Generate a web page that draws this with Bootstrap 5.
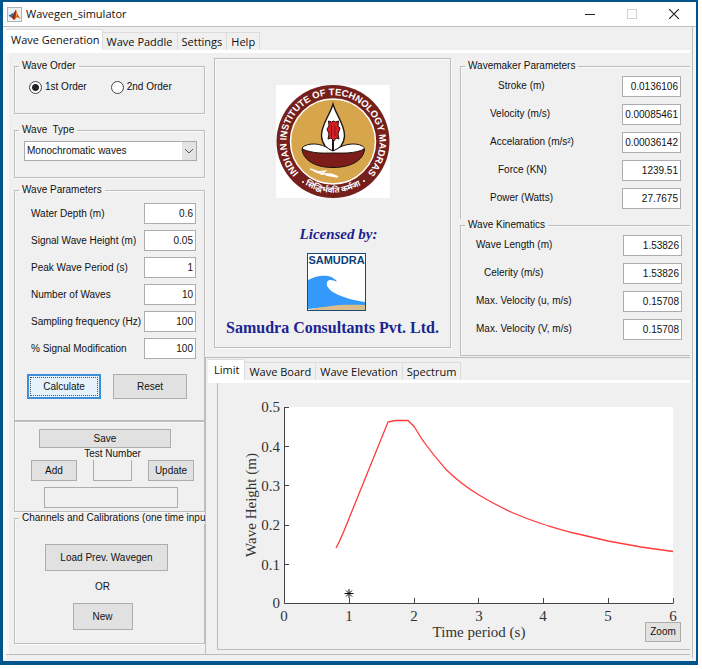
<!DOCTYPE html>
<html lang="en">
<head>
<meta charset="utf-8">
<meta name="viewport" content="width=device-width, initial-scale=1">
<title>Wavegen_simulator</title>
<link href="https://cdn.jsdelivr.net/npm/bootstrap@5.3.0/dist/css/bootstrap.min.css" rel="stylesheet">
<style>
  :root { --line: #bdbdbd; --face: #f0f0f0; --ink: #111; }
  body { font-family: "Liberation Sans", Arial, sans-serif; font-size: 10px; line-height: 12px; color: var(--ink); background: #fff; padding: 0 4px 4px 0; }
  .app-window { border: 3px solid #00568c; border-top-width: 2px; border-right-width: 2px; border-bottom-width: 4px; background: var(--face); min-height: calc(100vh - 4px); }

  .title-bar { height: 25px; background: #fff; border-bottom: 1px solid var(--line); padding: 0 17px 0 4px; font-family: "Open Sans", "Noto Sans", sans-serif; font-size: 11px; }
  .title-bar button { border: 0; background: none; padding: 0; line-height: 0; }
  .client { border-left: 3px solid #fafafa; border-right: 3px solid #f5f5f5; box-shadow: inset -1px 0 var(--line); padding: 3px 3px 3px 0; }

  .tab-strip { font-family: "Open Sans", "Noto Sans", sans-serif; font-size: 11px; height: 20px; border: 0; flex-wrap: nowrap; align-items: flex-end; }
  .tab-strip .nav-link { color: var(--ink); border: 1px solid #dcdcdc; border-width: 1px 1px 0 0; border-radius: 0; height: 18px; padding: 0 4px; line-height: 18px; white-space: nowrap; background: var(--face); margin: 0; }
  .tab-strip .nav-link.active { background: #fff; color: var(--ink); height: 21px; padding: 0 2px 0 5px; line-height: 20px; border-color: #dcdcdc; }
  .plots .tab-strip .nav-link.active { padding: 0 5px 0 6px; }
  .page { border-top: 3px solid #fff; border-bottom: 1px solid var(--line); }

  .side { width: 199px; flex: none; padding: 7px 0 0 8px; box-shadow: inset 3px 0 #f8f8f8; }
  .main-part { min-width: 0; }
  .frame { border: 1px solid var(--line); box-shadow: 1px 1px #fafafa, inset 1px 1px #fafafa; min-width: 0; margin: 0; padding: 0; }
  .frame > legend { float: none; width: auto; margin: 0 0 0 4px; padding: 0 3px; font-size: 10px; line-height: 12px; white-space: nowrap; }
  .orders { padding: 9px 16px 19px 14px; }
  .kinds { margin-top: 10px; }
  .params { margin-top: 6px; }
  .radio-pick { appearance: none; width: 13px; height: 13px; border: 1px solid #444; border-radius: 50%; background: #fff; margin: 0 3px 0 0; padding: 0; }
  .radio-pick:checked { background: radial-gradient(circle, #222 0 3px, #fff 4px); }
  .pick-box { position: relative; width: 173px; margin: 5px 0 16px 9px; line-height: 0; }
  .pick { appearance: none; display: block; height: 20px; width: 173px; border: 1px solid #aaa; border-radius: 0; font-size: 10px; line-height: 18px; padding: 0 18px 0 2px; color: var(--ink); background-color: #fff; }
  .pick-box svg { position: absolute; right: 1px; top: 1px; background: #e3e3e3; pointer-events: none; }
  .box { height: 21px; border: 1px solid #abadb3; border-radius: 0; background: #fff; font-size: 10px; padding: 0 2px; text-align: right; color: var(--ink); flex: none; min-width: 0; }
  .w-side { width: 52px; }
  .w-main { width: 59px; }
  .key { white-space: nowrap; }
  .key-row { display: flex; align-items: center; justify-content: space-between; height: 27px; }
  .key-row.tall { height: 28px; }

  .push { border: 1px solid #adadad; border-radius: 0; background: #e1e1e1; font-size: 10px; line-height: 12px; padding: 0; color: var(--ink); height: 25px; white-space: nowrap; }
  .push.focused { border: 2px solid #3a8fd8; background: #e5f1fb; outline: 1px dotted #555; outline-offset: -4px; }
  .push.small-push { height: 21px; }
  .push.big-push { height: 27px; }
  .actions { gap: 12px; padding: 12px 17px 21px 12px; }
  .runs { padding: 7px 10px 3px 16px; }
  .push.save-run { height: 19px; width: 132px; margin-left: 8px; }
  .test-row { height: 21px; }
  .test-row .push { width: 46px; }
  .test-no { width: 39px; background: transparent; border-top: 0; }
  .test-note { width: 134px; background: transparent; margin: 6px 0 0 13px; }
  .calib { overflow: hidden; }
  .load { width: 123px; }
  .fresh { width: 60px; }
  .calib-body { gap: 10px; padding: 20px 6px 13px 0; }
  .calib-body .fresh, .calib-body span { margin-right: 8px; }

  .top-part { padding: 5px 0 0 9px; gap: 9px; }
  .licence { color: #1b2490; font-family: "Liberation Serif", "Times New Roman", serif; font-weight: bold; font-size: 16px; line-height: 20px; margin-bottom: 9px; }
  .by-line { font-size: 15px; margin: 0 0 9px 12px; }
  .seal { margin: 26px 0; }
  .firm { margin: 7px 0 9px; }
  .readings { width: 230px; flex: none; padding-top: 2px; }
  .open-end { border-right: 0; box-shadow: inset 1px 1px #fafafa; }
  .maker { padding: 0 9px 7px 29px; }
  .kinem { padding: 0 8px 12px 15px; }

  .plots { border: 1px solid var(--line); border-right: 0; border-bottom: 0; padding: 2px 0 4px 2px; }
  .plot-frame { border-left: 1px solid var(--line); border-bottom: 1px solid var(--line); margin-left: 9px; position: relative; }
  .plot-frame .zoomer { position: absolute; right: 9px; bottom: 7px; width: 36px; height: 20px; }
  .plot { display: block; width: 100%; height: auto; font-family: "Liberation Serif", "Times New Roman", serif; font-size: 15px; fill: #333; }
</style>
<script src="https://cdn.jsdelivr.net/npm/bootstrap@5.3.0/dist/js/bootstrap.bundle.min.js"></script>
</head>
<body>
<main class="app-window">
  <header class="title-bar d-flex align-items-center">
    <svg width="15" height="15" viewBox="0 0 15 15" class="me-1" aria-hidden="true">
      <rect x=".5" y=".5" width="14" height="14" fill="#eef2f5" stroke="#a9b4bd"/>
      <path d="M1.5 8.5 5 6.5 6.5 5 5.500 10 4 10.500z" fill="#3477ad"/>
      <path d="M5 9.500 9 2.500 10.500 7 13.500 12 10 10 7.500 13z" fill="#d95319"/>
      <path d="M4.500 10.500 9 2.500 8.500 8 7 13z" fill="#8a2b16"/>
      <path d="M9 3 10 8 9 10.500z" fill="#f5a33c"/>
    </svg>
    <span class="flex-grow-1">Wavegen_simulator</span>
    <span class="d-flex align-items-center">
      <button type="button" aria-label="Minimize"><svg width="10" height="10" viewBox="0 0 10 10"><path d="M0 5.500h10" stroke="#222"/></svg></button>
      <button type="button" aria-label="Maximize" class="mx-4 px-2" disabled><svg width="10" height="10" viewBox="0 0 10 10"><rect x=".5" y=".5" width="9" height="9" fill="none" stroke="#d0d0d0"/></svg></button>
      <button type="button" aria-label="Close"><svg width="10" height="10" viewBox="0 0 10 10"><path d="M0 0l10 10M10 0 0 10" stroke="#222" stroke-width="1.200"/></svg></button>
    </span>
  </header>

  <div class="client">
    <nav class="nav nav-tabs tab-strip" aria-label="Main">
      <a class="nav-link active" href="#generation">Wave Generation</a>
      <a class="nav-link" href="#paddle">Wave Paddle</a>
      <a class="nav-link" href="#settings">Settings</a>
      <a class="nav-link" href="#help">Help</a>
    </nav>

    <div class="page d-flex" id="generation">
      <aside class="side">
        <fieldset class="frame">
          <legend>Wave Order</legend>
          <div class="d-flex orders">
            <input class="radio-pick" type="radio" name="order" id="o1" checked><label for="o1" class="pe-4">1st Order</label>
            <input class="radio-pick" type="radio" name="order" id="o2"><label for="o2">2nd Order</label>
          </div>
        </fieldset>

        <fieldset class="frame kinds">
          <legend>Wave&nbsp; Type</legend>
          <div class="pick-box">
            <select class="pick" aria-label="Wave type"><option>Monochromatic waves</option></select>
            <svg width="14" height="18" viewBox="0 0 14 18" aria-hidden="true"><path d="M3 7l4 4 4-4" fill="none" stroke="#555"/></svg>
          </div>
        </fieldset>

        <fieldset class="frame params">
          <legend>Wave Parameters</legend>
          <div class="ps-3 pe-2 pt-1">
            <div class="key-row"><label class="key" for="p1">Water Depth (m)</label><input class="box w-side" id="p1" value="0.6"></div>
            <div class="key-row"><label class="key" for="p2">Signal Wave Height (m)</label><input class="box w-side" id="p2" value="0.05"></div>
            <div class="key-row"><label class="key" for="p3">Peak Wave Period (s)</label><input class="box w-side" id="p3" value="1"></div>
            <div class="key-row"><label class="key" for="p4">Number of Waves</label><input class="box w-side" id="p4" value="10"></div>
            <div class="key-row"><label class="key" for="p5">Sampling frequency (Hz)</label><input class="box w-side" id="p5" value="100"></div>
            <div class="key-row"><label class="key" for="p6">% Signal Modification</label><input class="box w-side" id="p6" value="100"></div>
          </div>
          <div class="d-flex actions">
            <button type="button" class="push focused w-50">Calculate</button>
            <button type="button" class="push w-50">Reset</button>
          </div>
        </fieldset>

        <section class="frame runs" aria-label="Test runs">
          <button type="button" class="push save-run d-block">Save</button>
          <label class="d-block text-center" for="testno">Test Number</label>
          <div class="d-flex justify-content-between align-items-end test-row">
            <button type="button" class="push small-push">Add</button>
            <input class="box test-no" id="testno">
            <button type="button" class="push small-push">Update</button>
          </div>
          <input class="box test-note d-block" aria-label="Test note">
        </section>

        <fieldset class="frame calib">
          <legend>Channels and Calibrations (one time inpu</legend>
          <div class="d-flex flex-column align-items-center calib-body">
            <button type="button" class="push big-push load">Load Prev. Wavegen</button>
            <span>OR</span>
            <button type="button" class="push big-push fresh">New</button>
          </div>
        </fieldset>
      </aside>

      <div class="flex-grow-1 d-flex flex-column main-part">
        <div class="d-flex top-part">
          <section class="frame flex-grow-1 d-flex flex-column align-items-center licence" aria-label="Licence">
            <svg class="seal" width="114" height="113" viewBox="0 0 114 113" role="img" aria-label="Indian Institute of Technology Madras">
              <rect width="114" height="113" fill="#fff"/>
              <circle cx="57" cy="56.500" r="56.500" fill="#76201c"/>
              <circle cx="57" cy="56.500" r="42.500" fill="#d6a54c" stroke="#fff" stroke-width="1.500"/>
              <defs>
                <path id="ring" d="M24 89.500A46.500 46.500 0 1 1 90 89.500"/>
                <path id="ringlow" d="M24 96A52.500 52.500 0 0 0 90 96"/>
              </defs>
              <text font-family="Liberation Sans, Arial, sans-serif" font-size="9.500" font-weight="bold" fill="#fff"><textPath href="#ring" startOffset="50%" text-anchor="middle">INDIAN INSTITUTE OF TECHNOLOGY MADRAS</textPath></text>
              <circle cx="27" cy="97" r="1" fill="#fff"/><circle cx="88" cy="96" r="1" fill="#fff"/>
              <text font-family="Noto Sans Devanagari, Noto Sans, sans-serif" font-size="8" fill="#fff"><textPath href="#ringlow" startOffset="50%" text-anchor="middle">सिद्धिर्भवति कर्मजा</textPath></text>
              <path d="M57 19C54 30 45 40 45.500 51 46 59 51 65 57 66 63 65 68 59 68.500 51 69 40 60 30 57 19z" fill="#fff" stroke="#1b1411" stroke-width="1.300"/>
              <path d="M26 63C31 57 46 58 53 64L57 66 61 64C69 58 84 57 88.500 63L84 70H31z" fill="#fff" stroke="#1b1411" stroke-width="1"/>
              <path d="M26 64C38 69 48 68 57 68S78 69 88.500 64C88 75 75 82.500 57 82.500S27 75 26 64z" fill="#7d1d1a" stroke="#1b1411"/>
              <path d="M57 66V50" stroke="#1b1411" stroke-width="2"/>
              <path d="M52.500 36l3 1 2-1 2 1 3-1-.5 5 2 2-2 6 1 5-3-1-2 3-3-3-3 1 1-5-2-5 2-3z" fill="#d41f26" stroke="#2b1010"/>
              <path d="M55.500 40v12M59 41v10" stroke="#6f1016" stroke-width=".800"/>
              <path d="M34 84l9 3 6-1-3 3 9 0 5 2 2 1M38 86l8 3M50 90l12 2" fill="none" stroke="#fff" stroke-width="1.500"/>
            </svg>
            <em class="by-line">Licensed by:</em>
            <svg class="ms-2" width="59" height="58" viewBox="0 0 59 58" role="img" aria-label="Samudra">
              <rect x=".5" y=".5" width="58" height="57" fill="#fff"/>
              <path d="M1 27C8 23 15 22 21 23 26 24 29 27 30 29 26 27 22 26 20 29 18 35 27 41 37 44 45 47 52 48 58 49V53H30L1 56z" fill="#3399fb"/>
              <path d="M1 57C17 53 35 51 58 52V57z" fill="#d9bd8a"/>
              <text x="29.500" y="11" text-anchor="middle" font-family="Liberation Sans, Arial, sans-serif" font-size="11" font-weight="bold" fill="#0d3f77">SAMUDRA</text>
              <rect x=".5" y=".5" width="58" height="57" fill="none" stroke="#1d4a75"/>
            </svg>
            <span class="firm text-nowrap">Samudra Consultants Pvt. Ltd.</span>
          </section>

          <div class="readings">
            <fieldset class="frame open-end border-bottom-0">
              <legend>Wavemaker Parameters</legend>
              <div class="maker">
                <div class="key-row tall"><label class="key ps-2" for="m1">Stroke (m)</label><input class="box w-main" id="m1" value="0.0136106"></div>
                <div class="key-row tall"><label class="key" for="m2">Velocity (m/s)</label><input class="box w-main" id="m2" value="0.00085461"></div>
                <div class="key-row tall"><label class="key" for="m3">Accelaration (m/s²)</label><input class="box w-main" id="m3" value="0.00036142"></div>
                <div class="key-row tall"><label class="key ps-2" for="m4">Force (KN)</label><input class="box w-main" id="m4" value="1239.51"></div>
                <div class="key-row tall"><label class="key" for="m5">Power (Watts)</label><input class="box w-main" id="m5" value="27.7675"></div>
              </div>
            </fieldset>
            <fieldset class="frame open-end">
              <legend>Wave Kinematics</legend>
              <div class="kinem">
                <div class="key-row tall"><label class="key" for="k1">Wave Length (m)</label><input class="box w-main" id="k1" value="1.53826"></div>
                <div class="key-row tall"><label class="key ps-2" for="k2">Celerity (m/s)</label><input class="box w-main" id="k2" value="1.53826"></div>
                <div class="key-row tall"><label class="key" for="k3">Max. Velocity (u, m/s)</label><input class="box w-main" id="k3" value="0.15708"></div>
                <div class="key-row tall"><label class="key" for="k4">Max. Velocity (V, m/s)</label><input class="box w-main" id="k4" value="0.15708"></div>
              </div>
            </fieldset>
          </div>
        </div>

        <section class="plots flex-grow-1" aria-label="Plots">
          <nav class="nav nav-tabs tab-strip" aria-label="Plots">
            <a class="nav-link active" href="#limit">Limit</a>
            <a class="nav-link" href="#board">Wave Board</a>
            <a class="nav-link" href="#elevation">Wave Elevation</a>
            <a class="nav-link" href="#spectrum">Spectrum</a>
          </nav>
          <div class="page border-bottom-0" id="limit">
            <div class="plot-frame">
              <svg class="plot" viewBox="218 384 472 266" role="img" aria-label="Limiting wave height against time period">
                <rect x="284" y="408" width="389" height="196" fill="#fff"/>
                <path d="M284.500 408V604.500H673.500M284 408.500h5M284 447.500h5M284 486.500h5M284 526.500h5M284 565.500h5M349.500 604v-5M414.500 604v-5M478.500 604v-5M543.500 604v-5M608.500 604v-5M673.500 604v-5" fill="none" stroke="#444"/>
                <path d="M336 549C342 538 346 527 350 517L388 423 395 421.500H408L414.500 428C418 434 421 439 424 443 431 453 438 461 446 470.500 457 481 467 489 479 496 490 502.500 500 508 511 513 521 517.500 532 521.500 544 525.500 554 528.500 565 532 576 534.500L608 542 641 548 673 552.500" fill="none" stroke="#ff3b3b" stroke-width="1.300"/>
                <path d="M349 590v9M344.500 594.500h9M346 591.500l6 6M352 591.500l-6 6" stroke="#111"/>
                <g text-anchor="end">
                  <text x="280" y="413">0.5</text><text x="280" y="453">0.4</text><text x="280" y="492">0.3</text>
                  <text x="280" y="531">0.2</text><text x="280" y="571">0.1</text><text x="280" y="609">0</text>
                </g>
                <g text-anchor="middle">
                  <text x="284" y="622">0</text><text x="349" y="622">1</text><text x="414" y="622">2</text><text x="479" y="622">3</text>
                  <text x="543" y="622">4</text><text x="608" y="622">5</text><text x="673" y="622">6</text>
                  <text x="479" y="638">Time period (s)</text>
                  <text transform="translate(256 506) rotate(-90)">Wave Height (m)</text>
                </g>
              </svg>
              <button type="button" class="push zoomer">Zoom</button>
            </div>
          </div>
        </section>
      </div>
    </div>
  </div>
</main>
</body>
</html>
